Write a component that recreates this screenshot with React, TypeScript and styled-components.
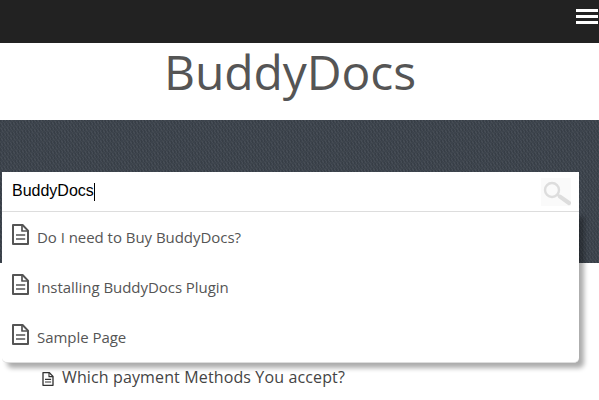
import React from 'react';
import styled, { createGlobalStyle } from 'styled-components';

const GlobalStyle = createGlobalStyle`
  * { box-sizing: border-box; }
  body { margin: 0; background: #fff; font-family: 'Open Sans', sans-serif; overflow: hidden; }
`;

const Page = styled.div`
  height: 400px;
  overflow: hidden;
`;

const TopBar = styled.header`
  height: 43px;
  background: #222;
  display: flex;
  justify-content: flex-end;
  padding: 9px 1px 0 0;
`;

const MenuButton = styled.button`
  width: 22px;
  height: 15px;
  padding: 0;
  border: 0;
  background: none;
  display: flex;
  flex-direction: column;
  gap: 3px;
`;

const MenuBar = styled.span`
  width: 22px;
  height: 3px;
  background: #fff;
`;

const Title = styled.h1`
  margin: 0;
  height: 77px;
  padding-right: 19px;
  font-size: 48px;
  font-weight: 400;
  line-height: 58px;
  letter-spacing: -0.08px;
  text-align: center;
  color: #555;
`;

const Hero = styled.section`
  height: 143px;
  padding: 52px 20px 0 2px;
  background-color: #3c434c;
  background-image:
    repeating-linear-gradient(56deg, rgba(255, 255, 255, 0.05) 0 1px, transparent 1px 2.7px),
    repeating-linear-gradient(90deg, rgba(0, 0, 0, 0.08) 0 1px, transparent 1px 3px);
`;

const Search = styled.div`
  position: relative;
`;

const Field = styled.div`
  height: 40px;
  padding: 0 8px 0 10px;
  display: flex;
  align-items: center;
  background: #fff;
  border-bottom: 1px solid #ddd;
`;

const Query = styled.span`
  font: 16px/20px 'Liberation Sans', Arial, sans-serif;
  color: #000;
  padding-bottom: 1px;
`;

const Caret = styled.i`
  width: 1px;
  height: 18px;
  background: #000;
`;

const SearchButton = styled.button`
  width: 30px;
  height: 28px;
  margin-left: auto;
  padding: 0;
  border: 0;
  background: #fafafa;
  display: flex;
`;

const Results = styled.ul`
  position: absolute;
  top: 40px;
  left: 0;
  right: 0;
  height: 151px;
  margin: 0;
  padding: 0 0 0 10px;
  list-style: none;
  background: #fff;
  border-bottom: 1px solid #ddd;
  border-radius: 0 0 5px 5px;
  box-shadow: 5px 5px 5px rgba(0, 0, 0, 0.33);
`;

const Result = styled.li`
  height: 50px;
  display: flex;
  align-items: flex-start;
  gap: 8px;
  padding-top: 12px;
  font-size: 15px;
  line-height: 26px;
  letter-spacing: -0.04px;
  color: #555;
`;

const DocTopic = styled.a`
  display: flex;
  align-items: flex-start;
  gap: 8px;
  padding: 103px 0 0 42px;
  font-size: 16px;
  line-height: 22px;
  letter-spacing: 0.13px;
  color: #444;
`;

const FileSvg = styled.svg<{ $top: number; $color: string }>`
  flex: none;
  margin-top: ${(p) => p.$top}px;
  color: ${(p) => p.$color};
`;

interface FileIconProps {
  width: number;
  height: number;
  top: number;
  color: string;
}

function FileIcon({ width, height, top, color }: FileIconProps) {
  return (
    <FileSvg $top={top} $color={color} width={width} height={height} viewBox="0 0 17 21" fill="none" stroke="currentColor" strokeWidth="2" strokeLinejoin="round">
      <path d="M1 1H10.6L16 6.6V20H1Z" />
      <path d="M10 1V7H16" strokeWidth="1.7" />
      <path d="M4 11H13.2M4 15H13.2" strokeWidth="1.7" />
    </FileSvg>
  );
}

const results = ['Do I need to Buy BuddyDocs?', 'Installing BuddyDocs Plugin', 'Sample Page'];

export default function App() {
  return (
    <Page>
      <GlobalStyle />
      <TopBar>
        <MenuButton aria-label="Menu">
          <MenuBar />
          <MenuBar />
          <MenuBar />
        </MenuButton>
      </TopBar>
      <Title>BuddyDocs</Title>
      <Hero>
        <Search>
          <Field>
            <Query>BuddyDocs</Query>
            <Caret />
            <SearchButton aria-label="Search">
              <svg width="30" height="28" viewBox="0 0 30 28" fill="none" stroke="#ddd">
                <circle cx="11" cy="12" r="7" strokeWidth="2.4" />
                <path d="M16 16.5L19 18.5" strokeWidth="2.4" />
                <path d="M19 18.6L28 25" strokeWidth="4.2" strokeLinecap="round" />
              </svg>
            </SearchButton>
          </Field>
          <Results>
            {results.map((label) => (
              <Result key={label}>
                <FileIcon width={17} height={21} top={0} color="#555" />
                <span>{label}</span>
              </Result>
            ))}
          </Results>
        </Search>
      </Hero>
      <DocTopic>
        <FileIcon width={12} height={14} top={6} color="#333" />
        <span>Which payment Methods You accept?</span>
      </DocTopic>
    </Page>
  );
}
